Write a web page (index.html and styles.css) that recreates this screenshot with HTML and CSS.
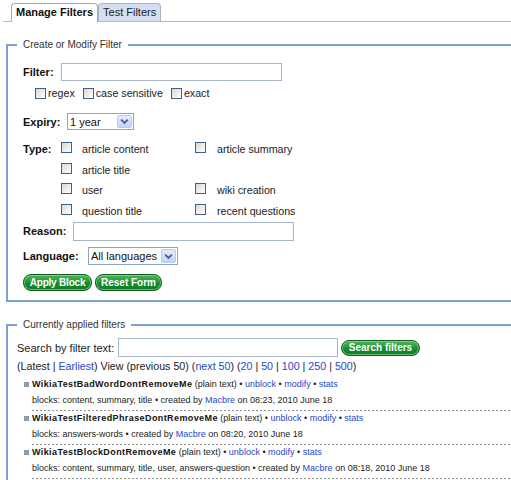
FILE: index.html
```html
<!DOCTYPE html>
<html>
<head>
<meta charset="utf-8">
<link rel="stylesheet" href="styles.css">
</head>
<body>
<div class="page">
  <div class="tabs">
    <div class="tab tab-active">Manage Filters</div>
    <div class="tab tab-other">Test Filters</div>
  </div>

  <fieldset class="box box-form">
    <legend>Create or Modify Filter</legend>
    <div class="inner">
      <div class="row row-filter">
        <label class="lbl w-filter">Filter:</label>
        <input class="text w-filter-input" type="text">
      </div>
      <div class="row row-opts">
        <label class="opt"><input type="checkbox" class="cb">regex</label>
        <label class="opt"><input type="checkbox" class="cb">case sensitive</label>
        <label class="opt"><input type="checkbox" class="cb">exact</label>
      </div>
      <div class="row row-expiry">
        <label class="lbl w-expiry">Expiry:</label>
        <div class="select sel-expiry"><span class="sel-text">1 year</span><span class="arrow"><svg width="9" height="7" viewBox="0 0 9 7"><path d="M1.2 1.6 L4.5 4.9 L7.8 1.6" fill="none" stroke="#4a5f8c" stroke-width="1.9"/></svg></span></div>
      </div>
      <div class="row-type">
        <label class="lbl w-type type-lbl">Type:</label>
        <div class="types">
          <input type="checkbox" class="cb"><span>article content</span>
          <input type="checkbox" class="cb"><span>article summary</span>
          <input type="checkbox" class="cb"><span>article title</span>
          <span></span><span></span>
          <input type="checkbox" class="cb"><span>user</span>
          <input type="checkbox" class="cb"><span>wiki creation</span>
          <input type="checkbox" class="cb"><span>question title</span>
          <input type="checkbox" class="cb"><span>recent questions</span>
        </div>
      </div>
      <div class="row row-reason">
        <label class="lbl w-reason">Reason:</label>
        <input class="text w-reason-input" type="text">
      </div>
      <div class="row row-lang">
        <label class="lbl w-lang">Language:</label>
        <div class="select sel-lang"><span class="sel-text">All languages</span><span class="arrow"><svg width="9" height="7" viewBox="0 0 9 7"><path d="M1.2 1.6 L4.5 4.9 L7.8 1.6" fill="none" stroke="#4a5f8c" stroke-width="1.9"/></svg></span></div>
      </div>
      <div class="row row-buttons">
        <button class="btn btn-apply">Apply Block</button>
        <button class="btn btn-reset">Reset Form</button>
      </div>
    </div>
  </fieldset>

  <fieldset class="box box-list">
    <legend>Currently applied filters</legend>
    <div class="row row-search">
      <span class="search-lbl">Search by filter text:</span>
      <input class="text w-search-input" type="text">
      <button class="btn btn-search">Search filters</button>
    </div>
    <div class="paging">(Latest | <a href="#">Earliest</a>) View (previous 50) (<a href="#">next 50</a>) (<a href="#">20</a> | <a href="#">50</a> | <a href="#">100</a> | <a href="#">250</a> | <a href="#">500</a>)</div>
    <ul class="filters">
      <li>
        <div class="f-title"><b>WikiaTestBadWordDontRemoveMe</b> (plain text) • <a href="#">unblock</a> • <a href="#">modify</a> • <a href="#">stats</a></div>
        <div class="f-info">blocks: content, summary, title • created by <a href="#">Macbre</a> on 08:23, 2010 June 18</div>
      </li>
      <li>
        <div class="f-title"><b>WikiaTestFilteredPhraseDontRemoveMe</b> (plain text) • <a href="#">unblock</a> • <a href="#">modify</a> • <a href="#">stats</a></div>
        <div class="f-info">blocks: answers-words • created by <a href="#">Macbre</a> on 08:20, 2010 June 18</div>
      </li>
      <li>
        <div class="f-title"><b>WikiaTestBlockDontRemoveMe</b> (plain text) • <a href="#">unblock</a> • <a href="#">modify</a> • <a href="#">stats</a></div>
        <div class="f-info">blocks: content, summary, title, user, answers-question • created by <a href="#">Macbre</a> on 08:18, 2010 June 18</div>
      </li>
    </ul>
  </fieldset>
</div>
</body>
</html>
```

FILE: styles.css
```css
html, body {
  margin: 0;
  padding: 0;
  background: #fff;
}
body {
  font-family: "Liberation Sans", Arial, sans-serif;
  font-size: 11px;
  color: #222;
}
a {
  color: #2448c8;
  text-decoration: none;
}
.page {
  width: 511px;
  height: 480px;
  overflow: hidden;
}

/* tabs */
.tabs {
  display: flex;
  align-items: flex-end;
  height: 18px;
  margin: 3px 0 0 3px;
  padding-left: 8px;
  border-bottom: 1px solid #b9b9b9;
}
.tab {
  box-sizing: border-box;
  padding: 0 4px;
  border: 1px solid #a8a8a8;
  border-bottom: none;
  border-radius: 4px 4px 0 0;
  font-size: 11px;
  line-height: 17px;
  color: #222;
}
.tab-active {
  height: 19px;
  margin-bottom: -1px;
  background: #fff;
  font-weight: bold;
  color: #111;
}
.tab-other {
  height: 18px;
  background: #d3dff2;
  border-color: #a9b3c4;
}

/* fieldsets */
.box {
  width: 560px;
  margin: 17px 0 0 6px;
  padding: 0 0 0 9px;
  border: 2px solid #7ca1d4;
  min-width: 0;
}
.box legend {
  font-size: 10px;
  line-height: 12px;
  padding: 0 6px;
  color: #333;
}
.box-form {
  padding-top: 11px;
  padding-bottom: 9px;
}
.box-list {
  padding-top: 7px;
  padding-bottom: 0;
  height: 200px;
}
.inner {
  padding-left: 6px;
}

.row {
  display: flex;
  align-items: center;
}
.lbl {
  font-weight: bold;
  font-size: 11px;
  color: #111;
  flex: none;
}
.w-filter { width: 38px; }
.w-expiry { width: 44px; }
.w-type { width: 38px; }
.w-reason { width: 50px; }
.w-lang { width: 65px; }

.text {
  box-sizing: border-box;
  margin: 0;
  padding: 0 2px;
  border: 1px solid #a5b6cd;
  background: #fff;
  font-family: inherit;
  font-size: 11px;
  outline: none;
}
.w-filter-input { width: 221px; height: 18px; }
.w-reason-input { width: 221px; height: 19px; }
.w-search-input { width: 220px; height: 19px; }

.row-filter { height: 19px; }
.row-opts { height: 14px; margin-top: 5px; padding-left: 12px; }
.row-expiry { height: 17px; margin-top: 13px; }
.row-type {
  display: flex;
  align-items: flex-start;
  margin-top: 9px;
}
.type-lbl { line-height: 20.5px; }
.row-reason { height: 20px; }
.row-lang { height: 18px; margin-top: 6px; }
.row-buttons { height: 17px; margin-top: 9px; gap: 3px; }

/* checkboxes */
.cb {
  -webkit-appearance: none;
  appearance: none;
  box-sizing: border-box;
  width: 11px;
  height: 11px;
  margin: 0;
  border: 1px solid #3d6389;
  background: linear-gradient(135deg, #d9d9d3 0%, #f4f4f1 70%, #fdfdfc 100%);
  flex: none;
}
.opt {
  display: flex;
  align-items: center;
  font-size: 10.7px;
  color: #222;
  margin-right: 8px;
}
.opt .cb { margin-right: 2px; }

.types {
  display: grid;
  grid-template-columns: 21px 113px 22px auto;
  grid-auto-rows: 20.5px;
  align-items: center;
  font-size: 10.7px;
  color: #222;
}
.types .cb { margin-top: -3px; }

/* selects */
.select {
  box-sizing: border-box;
  display: flex;
  align-items: center;
  border: 1px solid #8ea6c4;
  background: #fff;
  padding: 0 1px 0 2px;
  font-size: 11px;
  color: #111;
}
.sel-expiry { width: 67px; height: 17px; }
.sel-lang { width: 90px; height: 18px; }
.sel-text { flex: 1; white-space: nowrap; }
.arrow {
  box-sizing: border-box;
  width: 15px;
  height: 13px;
  display: flex;
  align-items: center;
  justify-content: center;
  border: 1px solid #bccbea;
  border-radius: 2px;
  background: linear-gradient(#e3ebfd, #c3d3f8);
}
.sel-lang .arrow { height: 14px; }

/* buttons */
.btn {
  box-sizing: border-box;
  height: 17px;
  margin: 0;
  padding: 0 5px;
  border: 1px solid #145c22;
  border-radius: 8px;
  background: linear-gradient(#4db45c 0%, #239b3a 45%, #148a2d 55%, #0f7d27 100%);
  box-shadow: inset 0 0 0 1px rgba(170, 230, 170, 0.55);
  color: #fff;
  font-family: "Liberation Sans", Arial, sans-serif;
  font-size: 10px;
  font-weight: bold;
  line-height: 14px;
  white-space: nowrap;
  cursor: pointer;
}
.btn-apply { width: 69px; letter-spacing: -0.2px; }
.btn-reset { width: 67px; }
.btn-search { width: 79px; height: 16px; margin-left: 3px; }

/* list section */
.row-search { height: 19px; }
.search-lbl { width: 101px; flex: none; font-size: 11px; color: #222; }
.paging {
  margin-top: 2px;
  line-height: 14px;
  font-size: 10.7px;
  color: #222;
  white-space: nowrap;
}
.filters {
  list-style: none;
  margin: 4px 0 0 0;
  padding: 0;
}
.filters li {
  position: relative;
  margin-left: 15px;
  padding-bottom: 2px;
  font-size: 9px;
  color: #222;
  white-space: nowrap;
  background: repeating-linear-gradient(to right, #8e8e8e 0 2px, transparent 2px 4px) left bottom / 100% 1px no-repeat;
}
.filters li::before {
  content: "";
  position: absolute;
  left: -8px;
  top: 5px;
  width: 5px;
  height: 5px;
  background: #8a9cb2;
}
.f-title { line-height: 15px; }
.f-title b { color: #111; letter-spacing: 0.4px; }
.f-info { line-height: 17px; }
```
